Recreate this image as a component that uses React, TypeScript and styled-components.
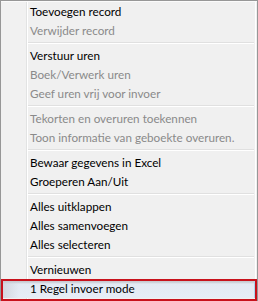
import React from "react";
import styled, { createGlobalStyle } from "styled-components";

const Global = createGlobalStyle`
  html, body { margin: 0; padding: 0; background: #f0f0f0; }
  #root { width: 258px; height: 301px; overflow: hidden; }
`;

const Menu = styled.div`
  box-sizing: border-box;
  width: 258px;
  height: 301px;
  border: 1px solid #979797;
  border-bottom: none;
  padding-top: 1px;
  background:
    linear-gradient(to right, transparent 0 254px, #ffffff 254px 255px, transparent 255px),
    linear-gradient(to right, #f1f1f1 0 25px, #e2e3e3 25px 26px, #ffffff 26px 27px, #f0f0f0 27px);
  box-shadow: inset 0 1px 0 #fbfbfb;
  font-family: "Lato", "Noto Sans", sans-serif;
  font-size: 11.7px;
  overflow: hidden;
`;

const Item = styled.div<{ $disabled?: boolean; $active?: boolean }>`
  position: relative;
  box-sizing: border-box;
  height: 19px;
  line-height: 19px;
  padding-left: 29px;
  white-space: nowrap;
  color: ${(p) => (p.$disabled ? "#8a8a8a" : "#000000")};
  ${(p) =>
    p.$active &&
    `
    background:
      linear-gradient(to right, rgba(200,204,210,0.7) 0, rgba(200,204,210,0) 18px),
      linear-gradient(to bottom, #c6c9cf 0, #c9ccd2 3px, #e3eaf3 5px, #e6edf6 100%);
    box-shadow: inset -3px 0 0 #a9d6ef;
  `}
`;

const Annotation = styled.span`
  position: absolute;
  left: 0;
  right: 0;
  top: 0;
  bottom: -3px;
  border: 2px solid #c8121c;
  pointer-events: none;
`;

const Separator = styled.div`
  height: 6px;
  margin: 0 3px 0 27px;
  background: linear-gradient(to bottom, transparent 0 2px, #e0e0e0 2px 3px, #ffffff 3px 4px, transparent 4px);
`;

type Entry = { label?: string; disabled?: boolean; active?: boolean; sep?: boolean };

const entries: Entry[] = [
  { label: "Toevoegen record" },
  { label: "Verwijder record", disabled: true },
  { sep: true },
  { label: "Verstuur uren" },
  { label: "Boek/Verwerk uren", disabled: true },
  { label: "Geef uren vrij voor invoer", disabled: true },
  { sep: true },
  { label: "Tekorten en overuren toekennen", disabled: true },
  { label: "Toon informatie van geboekte overuren.", disabled: true },
  { sep: true },
  { label: "Bewaar gegevens in Excel" },
  { label: "Groeperen Aan/Uit" },
  { sep: true },
  { label: "Alles uitklappen" },
  { label: "Alles samenvoegen" },
  { label: "Alles selecteren" },
  { sep: true },
  { label: "Vernieuwen" },
  { label: "1 Regel invoer mode", active: true },
];

export default function App() {
  return (
    <>
      <Global />
      <Menu>
        {entries.map((e, i) =>
          e.sep ? (
            <Separator key={i} />
          ) : (
            <Item key={i} $disabled={e.disabled} $active={e.active}>
              {e.label}
              {e.active && <Annotation />}
            </Item>
          )
        )}
      </Menu>
    </>
  );
}
